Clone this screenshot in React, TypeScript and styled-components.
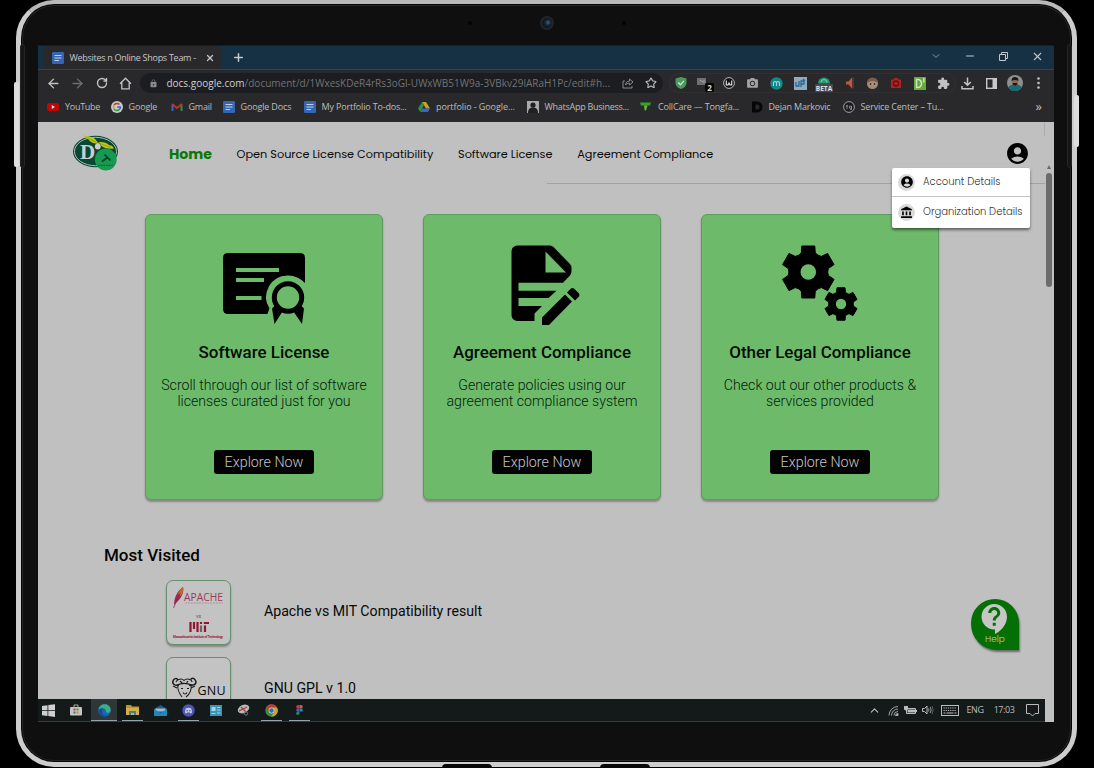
import React from "react";
import styled, { createGlobalStyle } from "styled-components";
import { MdAccountCircle, MdAccountBalance, MdContactSupport, MdLock, MdExtension, MdPhotoCamera } from "react-icons/md";
import { ArrowLeft, ArrowRight, RotateCw, Star, X, Plus, ChevronDown, ChevronUp, Minus } from "lucide-react";

const ui = `"Open Sans", "Noto Sans", sans-serif`;
const geo = `Poppins, Inter, sans-serif`;

const Global = createGlobalStyle`
  *, *::before, *::after { box-sizing: border-box; }
  body { margin: 0; background: #000; overflow: hidden; font-family: Roboto, sans-serif; }
  svg { display: block; flex: none; }
`;

const Stage = styled.div`
  position: relative;
  width: 1094px;
  height: 768px;
  padding-left: 16px;
  overflow: hidden;
  background: #000;
`;
const Device = styled.div`
  width: 1061px;
  height: 767px;
  border: 5px solid #cdcdcd;
  border-top: 4px solid #b9b9b9;
  border-radius: 38px;
  background: #0f0f0f;
  box-shadow: inset 0 0 0 1px #050505, inset 0 0 0 2px #262626;
`;
const SideKey = styled.div<{ $x: number; $y: number; $h: number }>`
  position: absolute;
  left: ${(p) => p.$x}px;
  top: ${(p) => p.$y}px;
  width: 5px;
  height: ${(p) => p.$h}px;
  border-radius: 2px;
  background: #dedede;
`;
const SideSlot = styled.div<{ $x: number }>`
  position: absolute;
  left: ${(p) => p.$x}px;
  top: 44px;
  width: 5px;
  height: 124px;
  border: 1px solid #252525;
  border-radius: 3px;
  background: #161616;
`;
const Foot = styled.div<{ $x: number }>`
  position: absolute;
  left: ${(p) => p.$x}px;
  top: 764px;
  width: 50px;
  height: 4px;
  border-radius: 6px 6px 0 0;
  background: #080808;
`;
const TopBezel = styled.div`
  height: 41px;
  display: flex;
  justify-content: center;
  align-items: center;
  gap: 68px;
  padding: 0 0 3px 1px;
`;
const Mic = styled.span`
  width: 4px;
  height: 4px;
  border-radius: 50%;
  background: #030303;
`;
const Lens = styled.span`
  width: 14px;
  height: 14px;
  border-radius: 50%;
  border: 2px solid #20262b;
  background: radial-gradient(circle at 60% 45%, #31506d 0 1px, #14202c 3px, #10151a 6px);
`;
const Screen = styled.div`
  width: 1016px;
  height: 677px;
  margin-left: 17px;
  display: flex;
  flex-direction: column;
  background: #c0c0c0;
  overflow: hidden;
`;

/* browser chrome */
const TabStrip = styled.div`
  height: 24px;
  display: flex;
  align-items: center;
  background: #153143;
  border-top: 1px solid #10202b;
  color: #c4c8ca;
`;
const Tab = styled.div`
  align-self: flex-end;
  width: 178px;
  height: 23px;
  margin-left: 5px;
  padding: 0 6px 0 8.5px;
  display: flex;
  align-items: center;
  border-radius: 5px 5px 0 0;
  background: #29292c;
  font: 400 9px/12px ${ui};
  white-space: nowrap;
`;
const TabTitle = styled.span`
  flex: 1;
  margin-left: 6px;
  letter-spacing: -0.28px;
`;
const NewTab = styled.div`
  flex: 1;
  padding-left: 11px;
`;
const WindowKeys = styled.div`
  display: flex;
  width: 135px;
  height: 20px;
  padding-bottom: 3px;
  align-items: center;
  justify-content: space-around;
`;
const Key = styled.span`
  width: 34px;
  display: flex;
  justify-content: center;
`;
const Toolbar = styled.div`
  height: 27px;
  display: flex;
  align-items: center;
  padding: 0 0 0 4px;
  background: #29292c;
  border-top: 1px solid #3b4247;
  color: #c2c2c4;
`;
const Slot = styled.span<{ $w?: number; $dim?: boolean }>`
  width: ${(p) => p.$w ?? 23.85}px;
  height: 20px;
  flex: none;
  display: flex;
  align-items: center;
  justify-content: center;
  color: ${(p) => (p.$dim ? "#6e6e71" : "inherit")};
`;
const Omnibox = styled.div`
  width: 523px;
  height: 20px;
  margin-left: 3px;
  padding: 0 0 0 9px;
  display: flex;
  align-items: center;
  border-radius: 10px;
  background: #1c1d20;
  color: #8a8b8e;
  font: 400 10px/14px ${ui};
`;
const Url = styled.span`
  flex: 1;
  margin-left: 8px;
  white-space: nowrap;
  color: #727376;
  letter-spacing: 0.01px;
  b { font-weight: 400; color: #d0d0d2; }
`;
const Extensions = styled.div`
  display: flex;
  margin-left: 6px;
  border-radius: 10px;
  box-shadow: inset 0 0 0 1px #313134;
`;
const Bookmarks = styled.div`
  height: 26px;
  display: flex;
  align-items: center;
  padding: 0 0 4px 9px;
  background: #29292c;
  color: #bdbdbf;
  font: 400 9px/12px ${ui};
`;
const Bookmark = styled.div<{ $w: number; $ls: number }>`
  width: ${(p) => p.$w}px;
  flex: none;
  display: flex;
  align-items: center;
  gap: 6px;
  white-space: nowrap;
  letter-spacing: ${(p) => p.$ls}px;
`;
const More = styled.span`
  flex: 1;
  padding: 0 12px 2px 0;
  text-align: right;
  font-size: 13px;
`;

/* page */
const Viewport = styled.div`
  height: 577px;
  display: flex;
  flex: none;
  overflow: hidden;
`;
const Page = styled.div`
  width: 1007px;
  position: relative;
`;
const ScrollRail = styled.div`
  width: 9px;
  padding: 43px 0 0 1px;
  display: flex;
  flex-direction: column;
  gap: 4px;
`;
const ScrollUp = styled.span`
  width: 0;
  border: 2.5px solid transparent;
  border-bottom: 4px solid #6a6a6a;
  border-top: 0;
  margin-left: 0.5px;
`;
const Thumb = styled.span`
  width: 6px;
  height: 114px;
  border-radius: 3px;
  background: #6c6c6c;
`;
const Header = styled.header`
  height: 62px;
  display: flex;
  align-items: center;
  padding: 0 15px 0 34px;
  background: linear-gradient(#a2a2a2, #a2a2a2) 509px 61px / 498px 1px no-repeat,
    linear-gradient(#acacac, #acacac) 1006px 0 / 1px 14px no-repeat;
`;
const Nav = styled.nav`
  flex: 1;
  display: flex;
  align-items: center;
  margin-left: 50px;
  padding-top: 3px;
  font-family: ${geo};
`;
const NavLink = styled.a<{ $w: number; $active?: boolean }>`
  width: ${(p) => p.$w}px;
  white-space: nowrap;
  font-size: ${(p) => (p.$active ? 14.1 : 11.3)}px;
  font-weight: ${(p) => (p.$active ? 700 : 400)};
  color: ${(p) => (p.$active ? "#087808" : "#0a0a0a")};
`;
const Menu = styled.div`
  position: absolute;
  top: 46px;
  right: 15.5px;
  width: 138px;
  background: #fff;
  border-radius: 2px;
  box-shadow: 0 2px 3px rgba(0, 0, 0, 0.5);
  font: 400 10px/14px ${geo};
`;
const MenuItem = styled.div`
  height: 28px;
  display: flex;
  align-items: center;
  gap: 8px;
  padding-left: 6.5px;
  white-space: nowrap;
  font-weight: 300;
  color: #333;
  & + & { height: 31.5px; border-top: 1px solid #c4c4c4; }
`;
const Disc = styled.span`
  width: 17px;
  height: 17px;
  display: grid;
  place-items: center;
  border-radius: 50%;
  background: #dadada;
  color: #000;
`;
const Cards = styled.section`
  display: flex;
  gap: 40px;
  padding: 30px 0 0 107px;
`;
const Card = styled.article`
  width: 238px;
  height: 286px;
  display: flex;
  flex-direction: column;
  align-items: center;
  padding-top: 29px;
  border: 1px solid #5f9a5f;
  border-radius: 6px;
  background: #6dbb6a;
  box-shadow: 0 2px 2px rgba(0, 0, 0, 0.3);
`;
const CardTitle = styled.h2`
  margin: 16px 0 0;
  font: 500 16.95px/20px Roboto, sans-serif;
  color: #050a05;
`;
const CardText = styled.p`
  height: 49px;
  margin: 15px 0 0;
  text-align: center;
  white-space: pre-line;
  font: 300 14.13px/16.4px Roboto, sans-serif;
  color: #03200a;
`;
const Explore = styled.button`
  width: 100px;
  height: 24px;
  margin-top: 24px;
  padding: 0;
  border: 0;
  border-radius: 3px;
  background: #030303;
  color: #c4c4c4;
  font: 300 14.3px/23px Roboto, sans-serif;
`;
const SectionTitle = styled.h2`
  margin: 45px 0 0 66px;
  font: 500 17px/20px Roboto, sans-serif;
  color: #050505;
`;
const Visited = styled.div`
  display: flex;
  align-items: center;
  gap: 33px;
  margin: 15px 0 0 128px;
  font-size: 14.15px;
  color: #080808;
  & + & { margin-top: 12px; }
`;
const Tile = styled.div`
  width: 65px;
  height: 65px;
  border: 1px solid #668f70;
  border-radius: 7px;
  background: #c3c3c3;
  box-shadow: 0 2px 2px rgba(0, 0, 0, 0.3);
  display: flex;
  flex-direction: column;
  align-items: center;
`;
const ItemName = styled.span`
  padding-bottom: 3px;
`;
const Help = styled.div`
  position: absolute;
  right: 26px;
  top: 477px;
  width: 48px;
  height: 51px;
  padding-top: 2px;
  display: flex;
  flex-direction: column;
  align-items: center;
  border-radius: 24px 24px 0 26px;
  background: #046f04;
  color: #c6c6c6;
  box-shadow: 1px 2px 2px rgba(0, 0, 0, 0.45);
`;
const HelpLabel = styled.span`
  margin-top: -3px;
  font: 300 9px/10px ${geo};
`;

/* taskbar */
const Taskbar = styled.div`
  width: 1007px;
  height: 23px;
  flex: none;
  display: flex;
  align-items: center;
  background: #131a19;
  border-bottom: 1px solid #3a3d3d;
  color: #bcbcbc;
`;
const Task = styled.span<{ $w?: number; $open?: boolean; $active?: boolean }>`
  width: ${(p) => p.$w ?? 27.9}px;
  height: 22px;
  flex: none;
  display: flex;
  align-items: center;
  justify-content: center;
  background:
    ${(p) => (p.$open ? `linear-gradient(#93a2ab, #93a2ab) center bottom / ${p.$active ? 26 : 21}px 1px no-repeat,` : "")}
    ${(p) => (p.$active ? "linear-gradient(#2f3738, #2f3738) center / 26px 100% no-repeat" : "none")};
`;
const Tray = styled.div`
  flex: 1;
  display: flex;
  justify-content: flex-end;
  align-items: center;
  padding-right: 1px;
  font: 400 9px/12px ${ui};
`;
const TrayText = styled.span<{ $w: number }>`
  width: ${(p) => p.$w}px;
  text-align: center;
  letter-spacing: -0.45px;
`;

const DocIcon = () => (
  <svg width="12" height="12" viewBox="0 0 12 12">
    <rect width="12" height="12" rx="1.2" fill="#3566b5" />
    <path d="M2.5 3.5h7M2.5 6h7M2.5 8.5h4.5" stroke="#c5cfdf" strokeWidth="1.2" />
  </svg>
);
const HomeIcon = () => (
  <svg width="13" height="13" viewBox="0 0 13 13" fill="none" stroke="currentColor" strokeWidth="1.3">
    <path d="M1 6.8 6.5 1.2 12 6.8M2.8 5.5v6.4h7.4V5.5" />
  </svg>
);
const ShareIcon = () => (
  <svg width="12" height="12" viewBox="0 0 12 12" fill="none" stroke="currentColor" strokeWidth="1">
    <path d="M3 4H1v7h9V9M3.5 8c.3-2.5 1.5-3.7 4-3.9V2L11 5 7.5 8V6.2C5.6 6.2 4.5 6.7 3.5 8z" />
  </svg>
);
const RestoreIcon = () => (
  <svg width="9" height="9" viewBox="0 0 9 9" fill="none" stroke="currentColor">
    <path d="M.5 2.5h6v6h-6zM2.5 2.5v-2h6v6h-2" />
  </svg>
);
const DownloadIcon = () => (
  <svg width="13" height="13" viewBox="0 0 13 13" fill="none" stroke="currentColor" strokeWidth="1.5">
    <path d="M6.5 .5v7.500M3.200 5l3.300 3.300L9.800 5M1 9v2.800h11V9" />
  </svg>
);
const PanelIcon = () => (
  <svg width="11" height="11" viewBox="0 0 11 11">
    <rect x=".7" y=".7" width="9.6" height="9.6" fill="none" stroke="#c8c8c8" strokeWidth="1.4" />
    <path d="M6.5 1h3.800v9H6.500z" fill="#c8c8c8" />
  </svg>
);
const Avatar = () => (
  <svg width="16" height="16" viewBox="0 0 16 16">
    <circle cx="8" cy="8" r="8" fill="#8b918f" />
    <path d="M1 12q7-6 14 0a8 8 0 0 1-14 0z" fill="#1d6b70" />
    <circle cx="8" cy="6.8" r="3.3" fill="#8f6a56" />
    <path d="M4.5 6q0-4 3.500-4t3.500 4Q8 4 4.500 6zM5.500 9q2.500 3 5 0l-.5-1h-4z" fill="#1e1715" />
  </svg>
);
const DotsIcon = () => (
  <svg width="3" height="12" viewBox="0 0 3 12" fill="#c2c2c4">
    <circle cx="1.5" cy="1.5" r="1.3" /><circle cx="1.5" cy="6" r="1.3" /><circle cx="1.5" cy="10.5" r="1.3" />
  </svg>
);

const YouTube = () => (
  <svg width="12" height="12" viewBox="0 0 12 12"><rect y="2" width="12" height="8" rx="2" fill="#c40505" /><path d="M4.8 4v4l3.2-2z" fill="#ddd" /></svg>
);
const GoogleG = () => (
  <svg width="12" height="12" viewBox="0 0 12 12" fill="none">
    <circle cx="6" cy="6" r="6" fill="#c9c9c9" />
    <g strokeWidth="1.5">
      <path d="M8.5 3.6A3.5 3.5 0 0 0 3 4.2" stroke="#c43b30" />
      <path d="M3 4.2a3.5 3.5 0 0 0 0 3.6" stroke="#cda31a" />
      <path d="M3 7.8a3.5 3.5 0 0 0 5.4.7" stroke="#2f8f48" />
      <path d="M8.4 8.5A3.5 3.5 0 0 0 9.4 6H6.2" stroke="#3868bd" />
    </g>
  </svg>
);
const Gmail = () => (
  <svg width="12" height="12" viewBox="0 0 12 12" fill="none" strokeWidth="2">
    <path d="M1.5 10V3.5" stroke="#3868bd" /><path d="M10.5 10V3.5" stroke="#2f8f48" />
    <path d="M1 3l5 4 5-4" stroke="#b8352b" />
  </svg>
);
const Drive = () => (
  <svg width="12" height="12" viewBox="0 0 12 12">
    <path d="M4 1h4l4 6.5H8z" fill="#cda31a" /><path d="M4 1l2 3.3L2.2 11 0 7.5z" fill="#2f8f48" />
    <path d="M4.2 7.5H12L10 11H2.2z" fill="#3868bd" />
  </svg>
);
const Portrait = () => (
  <svg width="12" height="12" viewBox="0 0 12 12"><rect width="12" height="12" fill="#aaa" /><circle cx="6" cy="4" r="2.6" fill="#202020" /><path d="M1 12c0-4 2-5.5 5-5.5S11 8 11 12z" fill="#202020" /></svg>
);
const Coll = () => (
  <svg width="12" height="12" viewBox="0 0 12 12"><path d="M0 1.5h11l-1 3H1z" fill="#2fa52c" /><path d="M4 4.5h3.5L6 9.5H4.8z" fill="#75b83f" /></svg>
);
const DBlack = () => (
  <svg width="12" height="12" viewBox="0 0 12 12"><path fillRule="evenodd" d="M1 .5h5a5.5 5.5 0 0 1 0 11H1zM4.500 3.500v5H6a2.500 2.500 0 0 0 0-5z" fill="#060606" /></svg>
);
const TgMark = () => (
  <svg width="12" height="12" viewBox="0 0 12 12" fill="none" stroke="#a0a0a0"><circle cx="6" cy="6" r="5.4" fill="#1b1b1d" /><path d="M4 3.8v4.400M3 5h2.200M8.500 5v3.500H7M8.500 5.200h-2v2h2" strokeWidth=".8" /></svg>
);

const bookmarks = [
  { name: "YouTube", icon: <YouTube />, w: 63.5, ls: -0.28 },
  { name: "Google", icon: <GoogleG />, w: 60, ls: -0.15 },
  { name: "Gmail", icon: <Gmail />, w: 52, ls: -0.25 },
  { name: "Google Docs", icon: <DocIcon />, w: 81, ls: -0.15 },
  { name: "My Portfolio To-dos...", icon: <DocIcon />, w: 114.5, ls: -0.17 },
  { name: "portfolio - Google...", icon: <Drive />, w: 108.5, ls: -0.08 },
  { name: "WhatsApp Business...", icon: <Portrait />, w: 113.5, ls: -0.26 },
  { name: "CollCare — Tongfa...", icon: <Coll />, w: 110.5, ls: -0.18 },
  { name: "Dejan Markovic", icon: <DBlack />, w: 92, ls: -0.2 },
  { name: "Service Center – Tu...", icon: <TgMark />, w: 110, ls: -0.18 },
];

const extensionIcons = [
  <svg width="12" height="12" viewBox="0 0 12 12"><path d="M6 0l5.500 1.500v4C11.500 9 9 11 6 12 3 11 .5 9 .5 5.500v-4z" fill="#4b9a5e" /><path d="M3.300 5.500l2.200 2.300 3.300-4" stroke="#d5e5d5" strokeWidth="1.300" fill="none" /></svg>,
  <svg width="18" height="18" viewBox="-2 0 18 18"><rect x="-1" y="4" width="9" height="7" fill="#6e6e70" /><path d="M2 6l3 2M6 6v3" stroke="#aaa" /><rect x="7" y="9" width="9" height="9" rx="1.500" fill="#050505" /><text x="11.500" y="16.500" textAnchor="middle" fontFamily="Open Sans" fontWeight="700" fontSize="8" fill="#ddd">2</text></svg>,
  <svg width="12" height="12" viewBox="0 0 12 12"><circle cx="6" cy="6" r="5.400" fill="#111" stroke="#bbb" /><path d="M3.300 3.500v4.300h1.800L6 6l.9 1.800h1.800V3.500" stroke="#ddd" fill="none" strokeWidth="1.200" /></svg>,
  <MdPhotoCamera size={13} color="#a3a3a5" />,
  <svg width="13" height="13" viewBox="0 0 13 13"><circle cx="6.500" cy="6.500" r="6.200" fill="#12898a" /><path d="M3.500 9V5.500q1.500-2 3 0V9M6.500 5.500q1.500-2 3 0V9" stroke="#a6d3d2" strokeWidth="1.100" fill="none" /></svg>,
  <svg width="13" height="13" viewBox="0 0 13 13"><rect width="13" height="13" fill="#92abb9" /><path d="M2 5v4h3V4M7 10V4h3v3H7M9 2l2 2" stroke="#22659b" strokeWidth="1.300" fill="none" /></svg>,
  <svg width="18" height="18" viewBox="0 0 18 18"><path d="M3 9.500a6 6 0 0 1 12 0z" fill="#1c9c70" /><path d="M6 8.500a3 3 0 0 1 6 0" fill="none" stroke="#8fc6ae" /><rect y="10" width="18" height="8" rx="1" fill="#48484c" /><text x="9" y="16.600" textAnchor="middle" fontFamily="Open Sans" fontWeight="700" fontSize="6.500" fill="#e0e0e0">BETA</text></svg>,
  <svg width="14" height="12" viewBox="0 0 14 12"><path d="M5 4.500h2.500L11 .5v11L7.500 7.500H5z" fill="#c25740" /><path d="M12 .5v11" stroke="#8d4032" /></svg>,
  <svg width="13" height="13" viewBox="0 0 13 13"><circle cx="6.500" cy="6.500" r="5.500" fill="#a58a73" /><path d="M1 6a5.500 5.500 0 0 1 11 0Q6.500 2 1 6z" fill="#7d5d4a" /><circle cx="4.500" cy="7" r="1.500" fill="#333" stroke="#bbb" strokeWidth=".7" /><circle cx="8.500" cy="7" r="1.500" fill="#333" stroke="#bbb" strokeWidth=".7" /></svg>,
  <svg width="12" height="12" viewBox="0 0 12 12"><path d="M1 2.500h2.500l1-1.500h3l1 1.500H11V11H1z" fill="#b32020" /><circle cx="6" cy="6.500" r="2.500" fill="none" stroke="#5c1212" strokeWidth="1.300" /></svg>,
  <svg width="12" height="13" viewBox="0 0 12 13"><rect width="12" height="13" fill="#65a93e" /><path d="M2.500 2.500v8H4q3.500-.5 3.500-4T4 2.500zM9.800 1v4.500" stroke="#d5e2ca" strokeWidth="1.400" fill="none" /></svg>,
  <MdExtension size={13} color="#c2c2c4" />,
];

const Logo = () => (
  <svg width="47" height="38" viewBox="0 0 47 38">
    <ellipse cx="23.5" cy="17.5" rx="22.5" ry="15.7" fill="#0a4733" />
    <ellipse cx="23.5" cy="17.5" rx="21" ry="14.2" fill="none" stroke="#bfcac5" strokeWidth=".9" />
    <text x="8" y="24.5" fontFamily="Liberation Serif" fontWeight="700" fontSize="21" fill="#c9cfcc">D</text>
    <path d="M11.500 .5c1.500 1.500 3 1.500 5 2 4 .5 7 2 8.500 5l3 2.500c-5 0-9.500-1.500-11.500-4.500-2.500-1-4.500-2-5-5zM27 8c4-.3 8 .5 10 3 2.500.3 4 1.500 5 3.500-5 .6-10-.2-13-3z" fill="#c3c512" />
    <path d="M14 3l11 5.500 14 5" stroke="#6f8f12" strokeWidth=".6" fill="none" />
    <circle cx="25.800" cy="12.500" r="2.900" fill="#c9cfcc" />
    <circle cx="33.800" cy="25.500" r="10.900" fill="#159a51" />
    <path d="M30 27.500l5.500-4M32.500 20.500l6 6" stroke="#063c20" strokeWidth="1.700" />
    <path d="M26 31.300h15" stroke="#0d6e3a" strokeWidth="1.200" strokeDasharray="2 .6" />
  </svg>
);

const Certificate = () => (
  <svg width="82" height="82" viewBox="0 0 82 82">
    <path fillRule="evenodd" fill="#000" d="M5 9h72q5 0 5 5v25A21.500 21.500 0 0 0 47.500 64L45 70H5q-5 0-5-5V14q0-5 5-5zM13 24v4h43v-4zM13 34v4h28v-4zM13 52v4h25.500v-4z" />
    <path fill="#6dbb6a" d="M65 31.500a21.500 21.500 0 0 0-18.500 33L44 71h38V40a21.500 21.500 0 0 0-17-8.500z" />
    <circle cx="65" cy="53.500" r="13.700" fill="none" stroke="#000" strokeWidth="5" />
    <path fill="#000" d="M49 64.500l3.500-3.500 7 6.500L51.500 80zM81 64.500L77.500 61l-7 6.500L79 80z" />
  </svg>
);
const FileEdit = () => (
  <svg width="82" height="82" viewBox="0 0 82 82">
    <path fillRule="evenodd" fill="#000" d="M16 1.500h33q2 0 3.500 1.500L68.500 19.500q2 2 2 4v4q0 2.500-2 4.500l-6.500 6.700H17.500v8h38L47.500 54h-30v8h23.500L33.500 69.500V77H16q-5.500-1-5.500-6V7.500q0-5 5.500-6zM44.500 7.500v21h20.500z" />
    <path fill="#000" d="M41 73.500L64 50.500l7 7L48 81h-7zM66 48.500l4-4q1.500-1 3 0l5 5q1 1.500 0 3L74 56.500z" />
  </svg>
);

const gearPath = (cx: number, cy: number, R: number) => {
  const pt = (r: number, deg: number) => {
    const a = (deg * Math.PI) / 180;
    return `${(cx + r * Math.sin(a)).toFixed(2)} ${(cy - r * Math.cos(a)).toFixed(2)}`;
  };
  let d = "";
  for (let i = 0; i < 6; i++) {
    const a = i * 60;
    d += `${i ? "L" : "M"}${pt(R * 0.76, a - 20)}L${pt(R, a - 14)}L${pt(R, a + 14)}L${pt(R * 0.76, a + 20)}Q${pt(R * 0.7, a + 30)} ${pt(R * 0.76, a + 40)}`;
  }
  return d + "Z";
};
const Gears = () => (
  <svg width="82" height="82" viewBox="0 0 82 82">
    {[[29.3, 28, 26.8, 7.8], [62, 60, 16.7, 5.2]].map(([x, y, r, h]) => (
      <g key={x}>
        <path d={gearPath(x, y, r)} fill="#000" stroke="#000" strokeLinejoin="round" />
        <circle cx={x} cy={y} r={h} fill="#6dbb6a" />
      </g>
    ))}
  </svg>
);

const ApacheMit = () => (
  <svg width="63" height="63" viewBox="0 0 63 63">
    <path d="M7 24C7 17 10 10 16 6c1.500 5-2 12-7 16z" fill="#a3294b" />
    <path d="M11 13c1-3 3-6 5-7 1 3-.5 6-2 9z" fill="#bd6b34" />
    <path d="M6.500 27L13 12" stroke="#6b2a5c" strokeWidth=".7" />
    <text x="17" y="19.800" fontFamily="Open Sans" fontSize="10.200" textLength="39" fill="#9a3a55">APACHE</text>
    <path d="M18 22h38" stroke="#a08a91" strokeWidth=".8" strokeDasharray="2 .8" />
    <text x="31.500" y="36.500" textAnchor="middle" fontFamily="Roboto" fontSize="5" fill="#555">vs</text>
    <path d="M23.500 41v10M27 41v7M30.500 41v10M34 41v2M38 44.500V51M36.800 42H42" stroke="#8d1732" strokeWidth="2.200" />
    <path d="M34 44.500V51" stroke="#666" strokeWidth="2.200" />
    <text x="6" y="57" fontFamily="Roboto" fontWeight="700" fontSize="3.300" textLength="50" fill="#9a2440">Massachusetts Institute of Technology</text>
  </svg>
);
const Gnu = () => (
  <svg width="63" height="63" viewBox="0 0 63 63" fill="none" stroke="#1c1c1c">
    <path d="M12 27c-4 1-7-1-6-4s4-3 5-1M22 27c5 1 8-1 6.500-4.500s-4-2.500-5-1" strokeWidth="1.500" />
    <path d="M9 24c1-3 6-4 8-1.500 2-2.500 8-1.500 8 1.500M10 27c4-2 10-2 15 0M11 27c-1 4 1 8 4 12M24 27c1 4-1 9-5 12M14 30.500h2M20 30.500h2M16 34.500c1 2 3 2 4 0M6 28l4 2M28 28l-4 2M13 23l3 3M21 23l-2 3" strokeWidth="1.100" />
    <text x="30.500" y="37" fontFamily="Open Sans" fontSize="12.500" textLength="28" fill="#080808" stroke="none">GNU</text>
  </svg>
);

const Windows = () => <svg width="13" height="13" viewBox="0 0 13 13" fill="#cfcfcf"><path d="M0 2l5.500-.8v5H0zM6.300 1.100L13 .2v6H6.300zM0 7h5.500v5L0 11.200zM6.300 7H13v6l-6.700-.9z" /></svg>;
const Store = () => <svg width="12" height="12" viewBox="0 0 12 12"><path d="M4 3V1h4v2" stroke="#aaa" fill="none" /><rect y="3" width="12" height="8.500" rx="1" fill="#c4c4c4" /><path d="M3.500 4.500h2v2h-2z" fill="#b9472c" /><path d="M6.500 4.500h2v2h-2z" fill="#5d8f2f" /><path d="M3.500 7.500h2v2h-2z" fill="#2c79ab" /><path d="M6.500 7.500h2v2h-2z" fill="#c39522" /></svg>;
const Edge = () => <svg width="13" height="13" viewBox="0 0 13 13"><circle cx="6.500" cy="6.500" r="6.200" fill="#1767ae" /><path d="M.5 6C1-1 12-2 12.700 6c0 3-4 3.500-5 2C9 5 4 2 .5 6z" fill="#3aae85" /><path d="M4.500 6c-2 3 1 6.500 5 5.500-4 3-9 0-9-5C2 4 4 4.500 4.500 6z" fill="#124f93" /></svg>;
const Folder = () => <svg width="13" height="12" viewBox="0 0 13 12"><path d="M0 1h5l1 1.500h7V11H0z" fill="#c69425" /><path d="M0 4h13v7H0z" fill="#d3b04a" /><path d="M3 11V7h7v4H8V9H5v2z" fill="#3f7fa3" /></svg>;
const Mail = () => <svg width="13" height="11" viewBox="0 0 13 11"><path d="M0 4l6.500-4L13 4v7H0z" fill="#145f97" /><path d="M1.500 3.500h10v3h-10z" fill="#9dbccb" /><path d="M0 4l6.500 4L13 4v7H0z" fill="#2388b4" /></svg>;
const Discord = () => <svg width="13" height="13" viewBox="0 0 13 13"><circle cx="6.500" cy="6.500" r="6.200" fill="#4c55b8" /><path d="M3 8.700c0-2 .4-3.500 1-4.500q2.500-.8 5 0c.6 1 1 2.500 1 4.500l-1.500.7-.6-.8H5.100l-.6.8z" fill="#c7c9dc" /><circle cx="5.200" cy="6.700" r=".8" fill="#4c55b8" /><circle cx="7.800" cy="6.700" r=".8" fill="#4c55b8" /></svg>;
const Panel = () => <svg width="12" height="11" viewBox="0 0 12 11"><rect width="12" height="11" fill="#3a94b5" /><rect x="1.500" y="2" width="4" height="4" fill="#aed2dd" /><path d="M7 2.500h3.500M7 5h3.500M1.500 8.500h4M7 8h3.500" stroke="#a8cfdc" /></svg>;
const Snip = () => <svg width="13" height="12" viewBox="0 0 13 12"><ellipse cx="6.500" cy="5" rx="6" ry="4" transform="rotate(-25 6.500 5)" fill="#b8b8ba" /><path d="M2 7l8-4M4 3l5 5" stroke="#a3393b" strokeWidth="1.200" /><circle cx="9" cy="9.500" r="1.700" fill="none" stroke="#6d7b86" /></svg>;
const ChromeMark = () => <svg width="13" height="13" viewBox="0 0 13 13"><circle cx="6.500" cy="6.500" r="6.200" fill="#2f9149" /><path d="M1.100 3.400A6.200 6.200 0 0 1 12 3.500H6.500L4 8z" fill="#c23b2f" /><path d="M12 3.500a6.200 6.200 0 0 1-5.700 9.200L9.300 7.500 8 3.500z" fill="#d0a51d" /><circle cx="6.500" cy="6.500" r="2.900" fill="#cfcfcf" /><circle cx="6.500" cy="6.500" r="2.200" fill="#3868bd" /></svg>;
const Figma = () => <svg width="7" height="10" viewBox="0 0 8 12"><path d="M4 0H2a2 2 0 0 0 0 4h2z" fill="#c53c25" /><path d="M4 0h2a2 2 0 0 1 0 4H4z" fill="#cc5b4e" /><path d="M4 4H2a2 2 0 0 0 0 4h2z" fill="#7d45bd" /><circle cx="6" cy="6" r="2" fill="#2188b9" /><path d="M4 8H2a2 2 0 1 0 2 2z" fill="#179158" /></svg>;

const tasks = [
  { icon: <Store /> },
  { icon: <Edge />, open: true, active: true },
  { icon: <Folder />, open: true },
  { icon: <Mail /> },
  { icon: <Discord />, open: true },
  { icon: <Panel /> },
  { icon: <Snip /> },
  { icon: <ChromeMark />, open: true },
  { icon: <Figma />, open: true },
];

const Wifi = () => <svg width="11" height="11" viewBox="0 0 11 11" fill="none" stroke="#a2a2a2"><path d="M1 10.500A9 9 0 0 1 10 1.500M3.500 10.500A6.500 6.500 0 0 1 10 4M6 10.500A4 4 0 0 1 10 6.500" /><path d="M7.500 10.500A2.500 2.500 0 0 1 10 8.500v2z" fill="#bcbcbc" /></svg>;
const Battery = () => <svg width="13" height="9" viewBox="0 0 13 9"><path d="M2.500 2.500h9v5h-9z" fill="none" stroke="#bcbcbc" /><path d="M3.500 3.500h7.500v3H3.500z" fill="#bcbcbc" /><path d="M12.500 4v2" stroke="#bcbcbc" /><path d="M0 0h4v3L2.500 5 0 3.500z" fill="#bcbcbc" /></svg>;
const Speaker = () => <svg width="12" height="10" viewBox="0 0 12 10" fill="none" stroke="#bcbcbc"><path d="M.5 3.500h2L5 1v8L2.500 6.500h-2z" /><path d="M6.500 3.500q1 1.500 0 3M8.200 2q2 3 0 6" stroke="#999" /><path d="M10 1q2.500 4 0 8" stroke="#5a5a5a" /></svg>;
const Keyboard = () => <svg width="18" height="11" viewBox="0 0 18 11" fill="none" stroke="#bcbcbc"><rect x=".5" y=".5" width="17" height="10" /><path d="M2.500 3h13M2.500 5.500h13" strokeDasharray="1.200 1" /><path d="M2.500 8h2M5.500 8h7M13.500 8h2" /></svg>;
const Notice = () => <svg width="13" height="13" viewBox="0 0 13 13" fill="none" stroke="#bcbcbc"><path d="M.5.5h12v9H9L6.500 12 4 9.500H.5z" /></svg>;

const cards = [
  { title: "Software License", text: "Scroll through our list of software\nlicenses curated just for you", icon: <Certificate /> },
  { title: "Agreement Compliance", text: "Generate policies using our\nagreement compliance system", icon: <FileEdit /> },
  { title: "Other Legal Compliance", text: "Check out our other products &\nservices provided", icon: <Gears /> },
];

export default function App() {
  return (
    <Stage>
      <Global />
      <SideKey $x={14} $y={82} $h={85} />
      <SideKey $x={1074} $y={95} $h={52} />
      <Device>
        <TopBezel><Mic /><Lens /><Mic /></TopBezel>
        <Screen>
          <TabStrip>
            <Tab>
              <DocIcon />
              <TabTitle>Websites n Online Shops Team -</TabTitle>
              <X size={10} strokeWidth={3} />
            </Tab>
            <NewTab><Plus size={13} strokeWidth={2.8} /></NewTab>
            <WindowKeys>
              <Key><ChevronDown size={12} strokeWidth={2} color="#8b979f" /></Key>
              <Key><Minus size={12} strokeWidth={2} /></Key>
              <Key><RestoreIcon /></Key>
              <Key><X size={13} strokeWidth={2} /></Key>
            </WindowKeys>
          </TabStrip>
          <Toolbar>
            <Slot><ArrowLeft size={15} strokeWidth={2.2} /></Slot>
            <Slot $dim><ArrowRight size={15} strokeWidth={2.2} /></Slot>
            <Slot><RotateCw size={12} strokeWidth={2.8} /></Slot>
            <Slot><HomeIcon /></Slot>
            <Omnibox>
              <MdLock size={9} />
              <Url><b>docs.google.com</b>/document/d/1WxesKDeR4rRs3oGl-UWxWB51W9a-3VBkv29lARaH1Pc/edit#h...</Url>
              <Slot><ShareIcon /></Slot>
              <Slot><Star size={12} strokeWidth={2.2} color="#c2c2c4" /></Slot>
            </Omnibox>
            <Extensions>
              {extensionIcons.map((icon, i) => <Slot key={i}>{icon}</Slot>)}
            </Extensions>
            <Slot><DownloadIcon /></Slot>
            <Slot><PanelIcon /></Slot>
            <Slot><Avatar /></Slot>
            <Slot><DotsIcon /></Slot>
          </Toolbar>
          <Bookmarks>
            {bookmarks.map((b) => (
              <Bookmark key={b.name} $w={b.w} $ls={b.ls}>{b.icon}<span>{b.name}</span></Bookmark>
            ))}
            <More>»</More>
          </Bookmarks>
          <Viewport>
            <Page>
              <Header>
                <Logo />
                <Nav>
                  <NavLink $w={67.5} $active>Home</NavLink>
                  <NavLink $w={221.5}>Open Source License Compatibility</NavLink>
                  <NavLink $w={119.2}>Software License</NavLink>
                  <NavLink $w={140}>Agreement Compliance</NavLink>
                </Nav>
                <MdAccountCircle size={25} color="#000" />
              </Header>
              <Menu>
                <MenuItem><Disc><MdAccountCircle size={14} /></Disc>Account Details</MenuItem>
                <MenuItem><Disc><MdAccountBalance size={13} /></Disc>Organization Details</MenuItem>
              </Menu>
              <Cards>
                {cards.map((c) => (
                  <Card key={c.title}>
                    {c.icon}
                    <CardTitle>{c.title}</CardTitle>
                    <CardText>{c.text}</CardText>
                    <Explore>Explore Now</Explore>
                  </Card>
                ))}
              </Cards>
              <SectionTitle>Most Visited</SectionTitle>
              <Visited><Tile><ApacheMit /></Tile><ItemName>Apache vs MIT Compatibility result</ItemName></Visited>
              <Visited><Tile><Gnu /></Tile><ItemName>GNU GPL v 1.0</ItemName></Visited>
              <Help><MdContactSupport size={36} /><HelpLabel>Help</HelpLabel></Help>
            </Page>
            <ScrollRail><ScrollUp /><Thumb /></ScrollRail>
          </Viewport>
          <Taskbar>
            <Task $w={20}><Windows /></Task>
            <Task $w={4.5} />
            {tasks.map((t, i) => <Task key={i} $open={t.open} $active={t.active}>{t.icon}</Task>)}
            <Tray>
              <Slot $w={19}><ChevronUp size={13} strokeWidth={2} /></Slot>
              <Slot $w={18}><Wifi /></Slot>
              <Slot $w={17}><Battery /></Slot>
              <Slot $w={18}><Speaker /></Slot>
              <Slot $w={26}><Keyboard /></Slot>
              <TrayText $w={24}>ENG</TrayText>
              <TrayText $w={34}>17:03</TrayText>
              <Slot $w={23}><Notice /></Slot>
            </Tray>
          </Taskbar>
        </Screen>
      </Device>
      <SideSlot $x={20} />
      <SideSlot $x={1067} />
      <Foot $x={442} />
      <Foot $x={600} />
    </Stage>
  );
}
